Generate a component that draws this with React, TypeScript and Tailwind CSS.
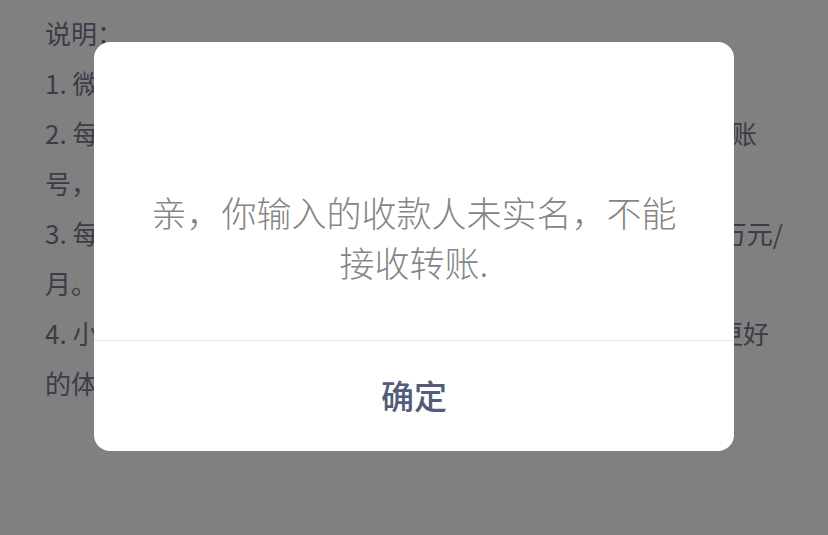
import React from "react";

const font = { fontFamily: '"Noto Sans CJK SC", "Noto Sans", sans-serif' };

function Line({ left, right, w }: { left: string; right?: string; w?: string }) {
  return (
    <div className={`flex h-[50px] items-center justify-between whitespace-nowrap ${w ?? ""}`}>
      <span>{left}</span>
      {right ? <span>{right}</span> : null}
    </div>
  );
}

export default function App() {
  return (
    <div className="relative h-[535px] w-[828px] overflow-hidden bg-[#808080]" style={font}>
      <div className="pl-[45px] pt-[7px] text-[26px] font-normal text-[#3c3c48]">
        <Line left="说明：" />
        <Line left="1.  微信转账功能仅支持已实名认证的用户使用。" />
        <Line left="2.  每日转账次数上限为50次，仅支持向同名" right="账" w="w-[712px]" />
        <Line left="号，或已实名认证的微信用户转账。" />
        <Line left="3.  每个账户单日转账额度为5万元，总额为20" right="万元/" w="w-[738px]" />
        <Line left="月。" />
        <Line left="4.  小额转账无需验证密码，为了给您提供" right="更好" w="w-[724px]" />
        <Line left="的体验，请确保网络畅通。" />
      </div>

      <div className="absolute left-[94px] top-[42px] flex h-[409px] w-[640px] flex-col overflow-hidden rounded-[16px] bg-white">
        <div className="flex h-[298px] flex-col items-center px-[55px] pt-[145px] text-center text-[35px] font-light leading-[50px] text-[#858585]">
          亲，你输入的收款人未实名，不能接收转账.
        </div>
        <div className="h-px bg-[#e6e6e6]" />
        <div className="flex flex-1 items-center justify-center text-[33px] font-medium text-[#535c78]">
          确定
        </div>
      </div>
    </div>
  );
}
